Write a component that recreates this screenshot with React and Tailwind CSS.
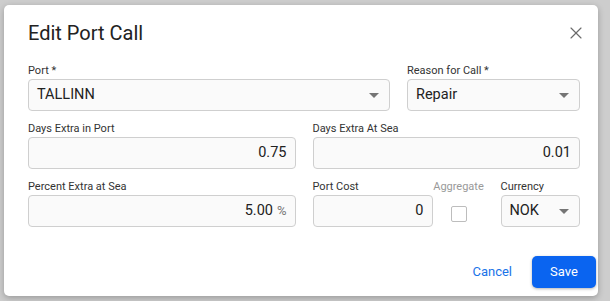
import { X } from "lucide-react";

function Caret() {
  return (
    <svg width="10" height="5" viewBox="0 0 10 5" className="shrink-0">
      <path d="M0 0 L10 0 L5 5 Z" fill="#757575" />
    </svg>
  );
}

function Label({ children, className = "" }) {
  return <div className={`h-[17px] text-[11px] leading-[17px] text-[#333] ${className}`}>{children}</div>;
}

function SelectBox({ value, className = "" }) {
  return (
    <div className={`h-[32px] flex items-center justify-between rounded-[4px] border border-[#cfcfcf] bg-[#fafafa] pl-[8px] pr-[10px] text-[14.5px] text-[#222] ${className}`}>
      <span>{value}</span>
      <Caret />
    </div>
  );
}

function NumberBox({ value, suffix, className = "" }) {
  return (
    <div className={`h-[32px] flex items-center justify-end rounded-[4px] border border-[#cfcfcf] bg-[#fafafa] px-[8px] text-[14.5px] text-[#222] ${className}`}>
      <span>{value}</span>
      {suffix && <span className="ml-[4px] text-[13px] text-[#777]">{suffix}</span>}
    </div>
  );
}

export default function App() {
  return (
    <div className="w-[610px] h-[301px] bg-[#cdcdcd] pt-[5px] pl-[4px]" style={{ fontFamily: "Roboto, 'Liberation Sans', sans-serif" }}>
      <div className="w-[594px] h-[291px] bg-white rounded-[5px] shadow-[0_2px_6px_rgba(0,0,0,0.25)] flex flex-col">
        <div className="flex items-center justify-between pl-[24px] pr-[12px] pt-[14px]">
          <h1 className="text-[20px] leading-[28px] text-[#222]">Edit Port Call</h1>
          <X size={20} strokeWidth={1.4} className="text-[#6b6b6b]" />
        </div>

        <div className="pl-[24px] pr-[18px] pt-[15px] flex flex-col gap-[9px]">
          <div className="flex gap-[17px]">
            <div className="flex-1">
              <Label>Port *</Label>
              <SelectBox value="TALLINN" />
            </div>
            <div className="w-[173px]">
              <Label>Reason for Call *</Label>
              <SelectBox value="Repair" />
            </div>
          </div>

          <div className="flex gap-[17px]">
            <div className="flex-1">
              <Label>Days Extra in Port</Label>
              <NumberBox value="0.75" />
            </div>
            <div className="flex-1">
              <Label>Days Extra At Sea</Label>
              <NumberBox value="0.01" />
            </div>
          </div>

          <div className="flex gap-[17px]">
            <div className="flex-1">
              <Label>Percent Extra at Sea</Label>
              <NumberBox value="5.00" suffix="%" />
            </div>
            <div className="flex-1 flex">
              <div className="w-[120px]">
                <Label>Port Cost</Label>
                <NumberBox value="0" />
              </div>
              <div className="w-[52px] flex flex-col items-center">
                <Label className="text-[#999]">Aggregate</Label>
                <div className="mt-[11px] w-[16px] h-[16px] rounded-[2px] border border-[#bdbdbd] bg-white" />
              </div>
              <div className="flex-1 ml-[16px]">
                <Label>Currency</Label>
                <SelectBox value="NOK" />
              </div>
            </div>
          </div>
        </div>

        <div className="mt-auto mb-[8px] mr-[2px] flex items-center justify-end gap-[20px]">
          <button className="text-[13px] text-[#1a73e8]">Cancel</button>
          <button className="w-[64px] h-[32px] rounded-[5px] bg-[#0a64f0] text-white text-[13px] shadow-[0_1px_3px_rgba(0,0,0,0.3)]">Save</button>
        </div>
      </div>
    </div>
  );
}
